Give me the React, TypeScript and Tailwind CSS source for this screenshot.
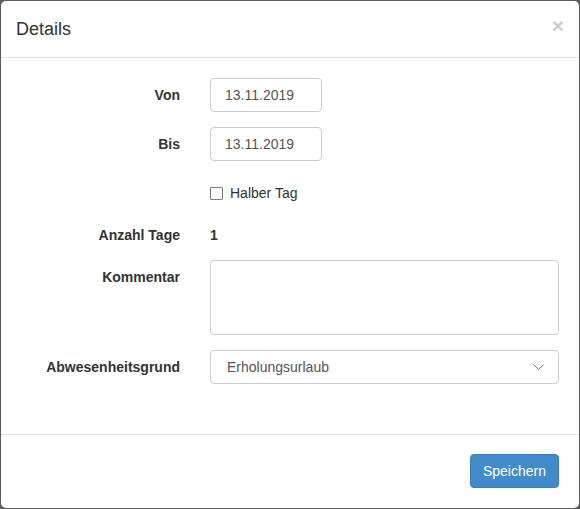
import React from 'react';

const Row: React.FC<{ label: string; top?: boolean; className?: string; children: React.ReactNode }> = ({
  label,
  top,
  className = '',
  children,
}) => {
  return (
    <div className={`grid grid-cols-[179px_1fr] gap-x-[30px] pr-[20px] ${top ? 'items-start' : 'items-center'} ${className}`}>
      <label className={`text-right font-bold text-[14px] leading-[20px] text-[#333] ${top ? 'pt-[7px]' : ''}`}>
        {label}
      </label>
      <div>{children}</div>
    </div>
  );
};

export default function App() {
  return (
    <div className="w-[580px] h-[509px] bg-[#5c5c5c] p-px font-['Liberation_Sans',Arial,sans-serif]">
      <div className="w-full h-full bg-white rounded-[5px] flex flex-col text-[#333]">
        <div className="flex items-start justify-between border-b border-[#e5e5e5] pl-[15px] pr-[15px] py-[15px]">
          <h4 className="text-[18px] leading-[26px]">Details</h4>
          <button
            type="button"
            className="text-[21px] leading-[21px] font-bold text-black opacity-20 mt-[-1px]"
          >
            ×
          </button>
        </div>

        <div className="flex-1 pt-[20px]">
          <Row label="Von">
            <input
              type="text"
              defaultValue="13.11.2019"
              className="w-[112px] h-[34px] border border-[#ccc] rounded-[4px] pl-[14px] pr-[10px] text-[14px] text-[#555] outline-none"
            />
          </Row>

          <Row label="Bis" className="mt-[15px]">
            <input
              type="text"
              defaultValue="13.11.2019"
              className="w-[112px] h-[34px] border border-[#ccc] rounded-[4px] pl-[14px] pr-[10px] text-[14px] text-[#555] outline-none"
            />
          </Row>

          <div className="grid grid-cols-[179px_1fr] gap-x-[30px] pr-[20px] mt-[15px] h-[34px] items-center">
            <div />
            <label className="flex items-center gap-[7px] text-[14px] leading-[20px] text-[#333]">
              <span className="w-[13px] h-[13px] border border-[#7a7a7a] bg-white rounded-[1px]" />
              Halber Tag
            </label>
          </div>

          <Row label="Anzahl Tage" className="mt-[8px] h-[34px]">
            <p className="text-[14px] leading-[20px] font-bold text-[#333]">1</p>
          </Row>

          <Row label="Kommentar" top className="mt-[8px]">
            <textarea className="block w-full h-[75px] border border-[#ccc] rounded-[4px] px-[12px] py-[6px] text-[14px] text-[#555] outline-none resize-none" />
          </Row>

          <Row label="Abwesenheitsgrund" className="mt-[15px]">
            <div className="flex items-center justify-between w-full h-[34px] border border-[#ccc] rounded-[4px] pl-[16px] pr-[14px] text-[14px] text-[#555]">
              <span>Erholungsurlaub</span>
              <svg width="11" height="6" viewBox="0 0 11 6" fill="none">
                <path d="M0.5 0.5 L5.5 5.3 L10.5 0.5" stroke="#777" strokeWidth="1" />
              </svg>
            </div>
          </Row>
        </div>

        <div className="flex justify-end border-t border-[#e5e5e5] pt-[19px] pb-[20px] pr-[20px]">
          <button
            type="button"
            className="h-[34px] px-[12px] rounded-[4px] border border-[#357ebd] bg-[#428bca] text-white text-[14px]"
          >
            Speichern
          </button>
        </div>
      </div>
    </div>
  );
}
